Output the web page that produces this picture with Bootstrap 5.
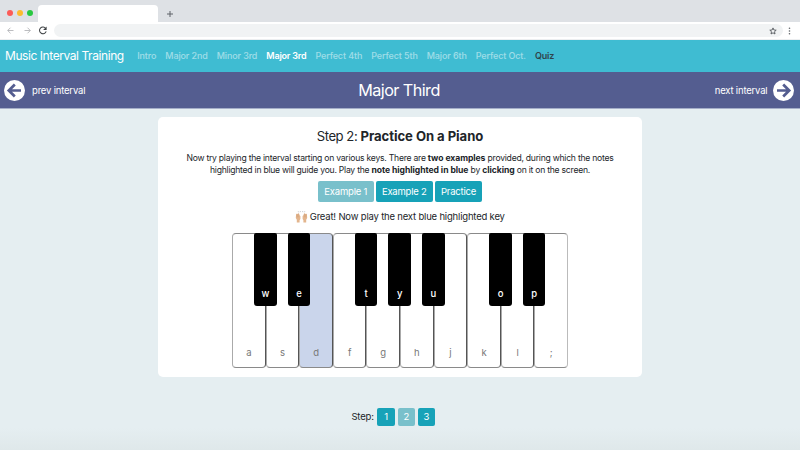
<!DOCTYPE html>
<html lang="en">
<head>
<meta charset="utf-8">
<title>Music Interval Training</title>
<meta name="viewport" content="width=device-width, initial-scale=1">
<link href="https://cdn.jsdelivr.net/npm/bootstrap@5.3.0/dist/css/bootstrap.min.css" rel="stylesheet">
<style>
  body { font-family: Inter, "Liberation Sans", sans-serif; font-size: 9.5px; line-height: 1.3; letter-spacing: -.19px; color: #212529; background: #e5eef1; height: 450px; overflow: hidden; }
  svg { display: block; flex: none; }
  .page { height: 450px; background: linear-gradient(#e5eef1 0 428px, #dfe8ea 450px); }
  .tabstrip { height: 22px; background: #dee1e5; padding-left: 7px; }
  .light { width: 6px; height: 6px; border-radius: 50%; margin-top: 4px; }
  .light.close-dot { background: #fc5b57; }
  .light.min-dot { background: #fdbb2d; }
  .light.max-dot { background: #28c840; }
  .tab-blank { width: 120px; height: 17px; border-radius: 4px 4px 0 0; background: #fff; margin-left: 5px; }
  .new-tab { margin: 5px 0 0 8px; }
  .toolbar { height: 18px; background: #fff; padding: 0 9px 0 7px; border-bottom: 1px solid #eceef0; }
  .reload { margin: 0 -1px 0 7px; }
  .forward { margin-left: 10px; }
  .address { height: 13px; border-radius: 7px; background: #f1f3f4; margin-left: 7px; padding-right: 6px; }
  .menu-dots { margin-left: 5px; }
  .topnav { height: 32px; background: #3fbcd2; padding: 0 0 0 5px; }
  .topnav .navbar-brand { font-size: 12px; line-height: 16px; margin-right: 13.5px; letter-spacing: -.43px; }
  .topnav .navbar-nav { gap: 9px; }
  .topnav .nav-link { font-size: 9px; font-weight: 500; line-height: 16px; color: rgba(255,255,255,.5); letter-spacing: -.12px; }
  .topnav .nav-link.active { color: #fff; font-weight: 600; letter-spacing: -.2px; }
  .topnav .nav-link.quiz { color: #30444b; font-weight: 600; }
  .intervals { height: 37px; background: #545d90; border-bottom: 1px solid #a5aec8; padding: 0 6px 0 4px; color: #fff; }
  .intervals h1 { font-size: 16.2px; font-weight: 400; letter-spacing: -.56px; padding-top: 2px; }
  .side { width: 120px; gap: 7px; }
  .side.next { gap: 5.5px; }
  .side span { padding-top: 2px; }
  .lesson { width: 484px; height: 260px; border-radius: 5px; margin: 8px auto 0; }
  .lesson h2 { font-size: 13.1px; font-weight: 400; line-height: 16px; margin: 11px 0 8px; letter-spacing: -.45px; }
  .lesson h2 strong { letter-spacing: -.05px; }
  .lesson .copy { font-size: 8.6px; line-height: 12.4px; margin: 0 0 4px; letter-spacing: -.24px; }
  .lesson .copy strong { letter-spacing: -.06px; }
  .btn-teal { --bs-btn-color: #fff; --bs-btn-bg: #17a2b8; --bs-btn-hover-color: #fff; --bs-btn-hover-bg: #138496; --bs-btn-disabled-color: #fff; --bs-btn-disabled-bg: #79c0cb; --bs-btn-disabled-opacity: 1; --bs-btn-border-width: 0; --bs-btn-border-radius: 2px; --bs-btn-font-size: 9.5px; --bs-btn-line-height: 21px; --bs-btn-padding-x: 0; --bs-btn-padding-y: 0; letter-spacing: -.22px; }
  .choices { gap: 2.5px; height: 21px; }
  .ex { width: 55.5px; } .ex2 { width: 56.5px; } .prac { width: 47px; }
  .feedback { gap: 1.5px; height: 14px; margin: 8px 0 9px; }
  .feedback span { padding-top: 1px; }
  .piano { width: 336px; height: 135px; }
  .white-key { width: 33.6px; border: 1px solid #8a8a8a; border-left-color: #aaa; border-right-color: #555; border-radius: 4px; color: #777; padding-bottom: 7px; background: #fff; }
  .white-key:last-child { border-right-color: #bbb; }
  .white-key.target { background: #cad5eb; }
  .black-key { width: 22.5px; height: 73px; right: -12px; top: -1px; z-index: 2; background: #000; color: #fff; border-radius: 2px 2px 3px 3px; padding-bottom: 5px; font-weight: 500; }
  .steps { margin-top: 31px; gap: 2.8px; padding-right: 13.6px; }
  .steps span { margin-right: 1px; }
  .steps .btn { width: 17.3px; --bs-btn-line-height: 18px; }
</style>
</head>
<body>
<div class="page">
  <div class="tabstrip d-flex align-items-center">
    <div class="d-flex gap-1">
      <span class="light close-dot"></span><span class="light min-dot"></span><span class="light max-dot"></span>
    </div>
    <div class="tab-blank align-self-end"></div>
    <svg class="new-tab" width="8" height="8" viewBox="0 0 8 8"><path d="M4 1v6M1 4h6" stroke="#5f6368" stroke-width="1"/></svg>
  </div>
  <div class="toolbar d-flex align-items-center">
    <svg width="7" height="7" viewBox="0 0 7 7" fill="none" stroke="#b4b6b9" stroke-width=".9"><path d="M6.5 3.5H.8M3.5.7.7 3.5l2.8 2.8"/></svg>
    <svg class="forward" width="7" height="7" viewBox="0 0 7 7" fill="none" stroke="#b4b6b9" stroke-width=".9"><path d="M.5 3.5h5.7M3.5.7l2.8 2.8-2.8 2.8"/></svg>
    <svg class="reload" width="10" height="9" viewBox="0 0 8.4 8"><path d="M6.6 2.2A3 3 0 1 0 7 4.7" fill="none" stroke="#3c4043" stroke-width=".9"/><path d="M7.4.5v3.1H4.3z" fill="#3c4043"/></svg>
    <div class="address flex-grow-1 d-flex align-items-center justify-content-end">
      <svg width="8" height="8" viewBox="0 0 8 8"><path d="m4 .9.9 2.1 2.3.2-1.7 1.5.5 2.3-2-1.2-2 1.2.5-2.3L.8 3.2 3.1 3z" fill="none" stroke="#55595d" stroke-width=".9"/></svg>
    </div>
    <svg class="menu-dots" width="3" height="8" viewBox="0 0 3 8" fill="#5f6368"><circle cx="1.5" cy="1.2" r=".8"/><circle cx="1.5" cy="4" r=".8"/><circle cx="1.5" cy="6.8" r=".8"/></svg>
  </div>
  <nav class="topnav navbar navbar-expand navbar-dark justify-content-start">
    <a class="navbar-brand p-0" href="#">Music Interval Training</a>
    <div class="navbar-nav">
      <a class="nav-link p-0" href="#">Intro</a>
      <a class="nav-link p-0" href="#">Major 2nd</a>
      <a class="nav-link p-0" href="#">Minor 3rd</a>
      <a class="nav-link p-0 active" href="#">Major 3rd</a>
      <a class="nav-link p-0" href="#">Perfect 4th</a>
      <a class="nav-link p-0" href="#">Perfect 5th</a>
      <a class="nav-link p-0" href="#">Major 6th</a>
      <a class="nav-link p-0" href="#">Perfect Oct.</a>
      <a class="nav-link p-0 quiz" href="#">Quiz</a>
    </div>
  </nav>
  <header class="intervals d-flex align-items-center justify-content-between">
    <div class="side d-flex align-items-center">
      <svg width="21" height="21" viewBox="0 0 21 21"><circle cx="10.5" cy="10.5" r="10.5" fill="#fff"/><path d="M17 10.5H5M10.8 4.5l-6 6 6 6" fill="none" stroke="#545d90" stroke-width="2.7"/></svg>
      <span>prev interval</span>
    </div>
    <h1 class="m-0">Major Third</h1>
    <div class="side next d-flex align-items-center justify-content-end">
      <span>next interval</span>
      <svg width="21" height="21" viewBox="0 0 21 21"><circle cx="10.5" cy="10.5" r="10.5" fill="#fff"/><path d="M4 10.5h12M10.2 4.5l6 6-6 6" fill="none" stroke="#545d90" stroke-width="2.7"/></svg>
    </div>
  </header>
  <main class="lesson bg-white d-flex flex-column align-items-center text-center">
    <h2>Step 2: <strong>Practice On a Piano</strong></h2>
    <p class="copy text-nowrap">Now try playing the interval starting on various keys. There are <strong>two examples</strong> provided, during which the notes<br>highlighted in blue will guide you. Play the <strong>note highlighted in blue</strong> by <strong>clicking</strong> on it on the screen.</p>
    <div class="choices d-flex">
      <button class="btn btn-teal ex" disabled>Example 1</button>
      <button class="btn btn-teal ex2">Example 2</button>
      <button class="btn btn-teal prac">Practice</button>
    </div>
    <div class="feedback d-flex align-items-center">
      <svg width="13" height="12" viewBox="0 0 13 12"><path d="M1.1 3.2 2 2.5l.5.7.8-1 .8.5.5 1.5.8.7V8L4.6 9.2v2.2H1.8V8.8L.8 7zM11.9 3.2l-.9-.7-.5.7-.8-1-.8.5-.5 1.5-.8.7V8l.8 1.2v2.2h2.8V8.8l1-1.8z" fill="#e3b58d"/><path d="M2.1 3.3v3M3.3 2.7v3.5M10.9 3.3v3M9.7 2.7v3.5" stroke="#c8946c" stroke-width=".4"/><path d="M3.2.3l.5 1M5.2.1l.3 1M7.8.1l-.3 1M9.8.3l-.5 1" stroke="#969ca2" stroke-width=".6"/></svg>
      <span>Great! Now play the next blue highlighted key</span>
    </div>
    <div class="piano d-flex">
      <div class="white-key position-relative d-flex align-items-end justify-content-center">a<span class="black-key position-absolute d-flex align-items-end justify-content-center">w</span></div>
      <div class="white-key position-relative d-flex align-items-end justify-content-center">s<span class="black-key position-absolute d-flex align-items-end justify-content-center">e</span></div>
      <div class="white-key target position-relative d-flex align-items-end justify-content-center">d</div>
      <div class="white-key position-relative d-flex align-items-end justify-content-center">f<span class="black-key position-absolute d-flex align-items-end justify-content-center">t</span></div>
      <div class="white-key position-relative d-flex align-items-end justify-content-center">g<span class="black-key position-absolute d-flex align-items-end justify-content-center">y</span></div>
      <div class="white-key position-relative d-flex align-items-end justify-content-center">h<span class="black-key position-absolute d-flex align-items-end justify-content-center">u</span></div>
      <div class="white-key position-relative d-flex align-items-end justify-content-center">j</div>
      <div class="white-key position-relative d-flex align-items-end justify-content-center">k<span class="black-key position-absolute d-flex align-items-end justify-content-center">o</span></div>
      <div class="white-key position-relative d-flex align-items-end justify-content-center">l<span class="black-key position-absolute d-flex align-items-end justify-content-center">p</span></div>
      <div class="white-key position-relative d-flex align-items-end justify-content-center">;</div>
    </div>
  </main>
  <div class="steps d-flex align-items-center justify-content-center">
    <span>Step:</span>
    <button class="btn btn-teal">1</button>
    <button class="btn btn-teal" disabled>2</button>
    <button class="btn btn-teal">3</button>
  </div>
</div>
<script src="https://cdn.jsdelivr.net/npm/bootstrap@5.3.0/dist/js/bootstrap.bundle.min.js"></script>
</body>
</html>
